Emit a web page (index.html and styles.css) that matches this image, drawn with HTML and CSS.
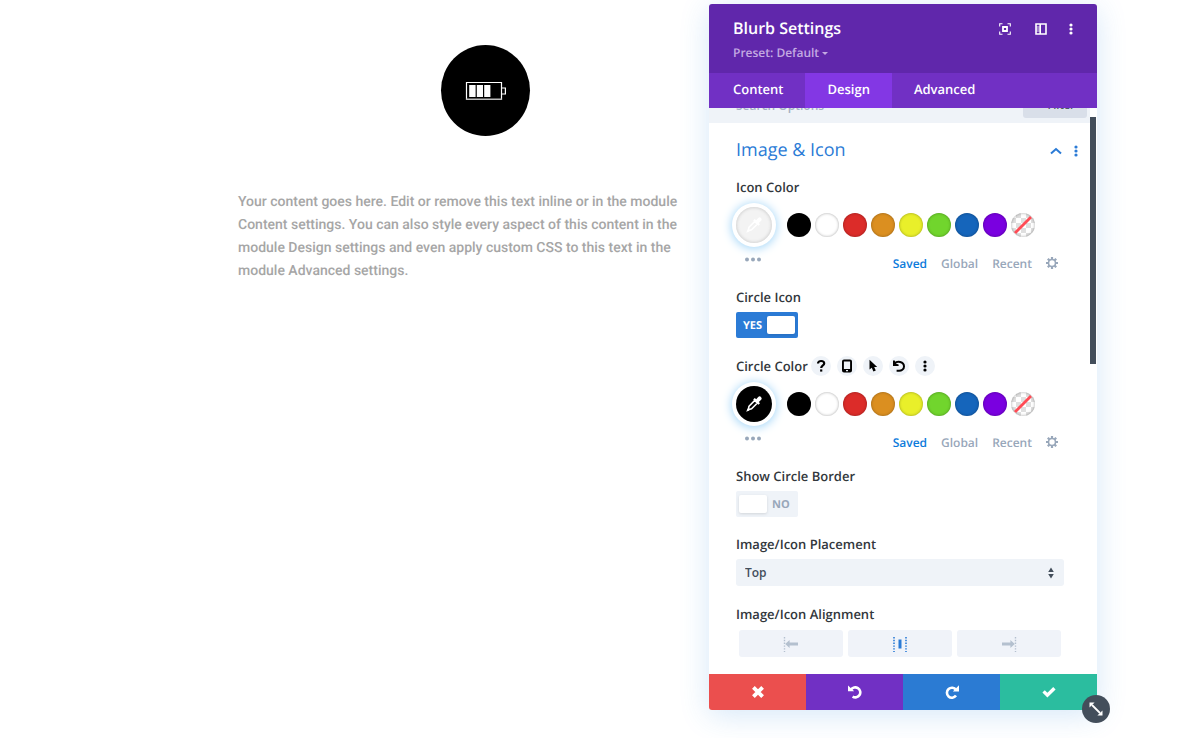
FILE: index.html
```html
<!DOCTYPE html>
<html lang="en">
<head>
<meta charset="utf-8">
<meta name="viewport" content="width=device-width, initial-scale=1">
<title>Blurb Settings</title>
<link rel="stylesheet" href="styles.css">
</head>
<body>
<svg width="0" height="0" class="sprite" aria-hidden="true">
  <defs>
    <symbol id="dots-v" viewBox="0 0 4 12"><circle cx="2" cy="2" r="1.6"/><circle cx="2" cy="6" r="1.6"/><circle cx="2" cy="10" r="1.6"/></symbol>
    <symbol id="dots-h" viewBox="0 0 18 5"><circle cx="3" cy="2.5" r="2"/><circle cx="9" cy="2.5" r="2"/><circle cx="15" cy="2.5" r="2"/></symbol>
    <symbol id="dropper" viewBox="0 0 18 18"><path d="M3.2 14.8 4 11.2 9.8 5.4 12.4 8 6.6 13.8Z" fill="none" stroke="currentColor" stroke-width="1.6" stroke-linejoin="round"/><path d="M8.2 4.6 9.8 3 11.2 4.2 13.2 2Q14.6.6 16 1.9 17.4 3.4 16.2 4.8L13.8 7 15 8.2 13.4 9.8Z"/><path d="M1.2 16.8 2.6 13.6 4.4 15.4Z"/></symbol>
    <symbol id="gear" viewBox="0 0 12 12"><circle cx="6" cy="6" r="3.5" fill="none" stroke="currentColor" stroke-width="1.6"/><path d="M6 0V2.4M6 9.6V12M0 6h2.4M9.6 6H12M1.8 1.8 3.4 3.4M8.6 8.6 10.2 10.2M10.2 1.8 8.6 3.4M3.4 8.6 1.8 10.2" fill="none" stroke="currentColor" stroke-width="2.2"/></symbol>
    <symbol id="undo" viewBox="0 0 14 14"><path d="M3 4.8A5 5 0 1 1 4.6 11.6" fill="none" stroke="currentColor" stroke-width="2.6"/><path d="M0 .4 6.2 6.2H0Z"/></symbol>
    <symbol id="undo-thin" viewBox="0 0 14 14"><path d="M2.6 4.6C5 1.4 12 2.4 12 7.4 12 10.4 9.4 12 6.6 11.8H4.6" fill="none" stroke="currentColor" stroke-width="2"/><path d="M1 1.6V7H6.6V5.4L3.6 4.6 2.8 1.6Z"/></symbol>
  </defs>
</svg>

<main class="blurb">
  <div class="blurb-icon">
    <svg width="42" height="20" viewBox="0 0 42 20" fill="none" aria-hidden="true">
      <path d="M1.5 1.5H36.5V18.5H1.5Z" stroke="#fff" stroke-width="1.2"/>
      <path d="M1 18.3H37" stroke="#bbb" stroke-width="1.4"/>
      <path d="M37 7H40.4V13H37" stroke="#fff" stroke-width="1.2"/>
      <path d="M4.2 4H10.6V16H4.2ZM11.8 4H18V16H11.8ZM19.2 4H25.4V16H19.2Z" fill="#fff"/>
    </svg>
  </div>
  <p class="blurb-text">Your content goes here. Edit or remove this text inline or in the module Content settings. You can also style every aspect of this content in the module Design settings and even apply custom CSS to this text in the module Advanced settings.</p>
</main>

<aside class="panel" aria-label="Blurb Settings">
  <header class="panel-header">
    <div>
      <h1 class="panel-title">Blurb Settings</h1>
      <button class="preset">Preset: Default <span class="caret"></span></button>
    </div>
    <div class="header-actions">
      <button aria-label="Expand"><svg width="12" height="12" viewBox="0 0 12 12" fill="none" stroke="currentColor"><path d="M.7 3.5V.7H3.5M8.5.7H11.3V3.5M11.3 8.5V11.3H8.5M3.5 11.3H.7V8.5" stroke-width="1.1"/><path d="M4 4H8V8H4Z" stroke-width="1.8"/></svg></button>
      <button aria-label="Dock panel"><svg width="12" height="12" viewBox="0 0 12 12" fill="none" stroke="currentColor"><path d="M1 1H11V11H1ZM5.2 1V11" stroke-width="1.6"/><path d="M1 4H5M1 6H5M1 8H5" stroke-width=".8"/></svg></button>
      <button aria-label="More"><svg width="4" height="12"><use href="#dots-v"/></svg></button>
    </div>
  </header>
  <nav class="tabs">
    <button class="tab">Content</button>
    <button class="tab tab-active">Design</button>
    <button class="tab">Advanced</button>
  </nav>

  <div class="panel-body">
    <div class="panel-content">
      <div class="search-clip">
        <div class="search">
          <input type="search" class="search-input" placeholder="Search Options" aria-label="Search Options">
          <button class="filter"><span>+</span> Filter</button>
        </div>
      </div>
      <section class="options">
        <div class="section-head">
          <h2 class="section-title">Image &amp; Icon</h2>
          <button aria-label="Collapse"><svg width="12" height="8" viewBox="0 0 12 8" fill="none" stroke="currentColor" stroke-width="2"><path d="M1 6.6 6 2 11 6.6"/></svg></button>
          <button aria-label="Section options"><svg width="4" height="12"><use href="#dots-v"/></svg></button>
        </div>

        <div class="field field-color">
          <div class="label-row"><span class="label">Icon Color</span></div>
          <div class="palette">
            <button class="picker picker-white" aria-label="Pick icon color"><svg width="18" height="18"><use href="#dropper"/></svg></button>
            <button class="swatch black" aria-label="Black"></button>
            <button class="swatch white" aria-label="White"></button>
            <button class="swatch red" aria-label="Red"></button>
            <button class="swatch orange" aria-label="Orange"></button>
            <button class="swatch yellow" aria-label="Yellow"></button>
            <button class="swatch green" aria-label="Green"></button>
            <button class="swatch blue" aria-label="Blue"></button>
            <button class="swatch purple" aria-label="Purple"></button>
            <button class="swatch none" aria-label="Transparent"><svg width="24" height="24" viewBox="0 0 24 24"><path d="M4 20 20 4" stroke="#ff4b55" stroke-width="2.8"/></svg></button>
          </div>
          <div class="palette-foot">
            <button class="more" aria-label="More colors"><svg width="18" height="5"><use href="#dots-h"/></svg></button>
            <button class="source source-active">Saved</button>
            <button class="source">Global</button>
            <button class="source">Recent</button>
            <button class="source" aria-label="Palette settings"><svg width="12" height="12"><use href="#gear"/></svg></button>
          </div>
        </div>

        <div class="field">
          <label class="label" for="circle-icon">Circle Icon</label>
          <label class="toggle toggle-on">YES<input type="checkbox" id="circle-icon" checked></label>
        </div>

        <div class="field field-color">
          <div class="label-row label-row-tools">
            <span class="label">Circle Color</span>
            <button class="tool" aria-label="Help"><svg width="10" height="14" viewBox="0 0 10 14" fill="none" stroke="currentColor" stroke-width="2.2"><path d="M2 4.4C2 1.2 8.2 1.2 8.2 4.4 8.2 6.4 5.2 6.4 5.2 9"/><path d="M5.2 10.4V12.6"/></svg></button>
            <button class="tool" aria-label="Responsive"><svg width="10" height="14" viewBox="0 0 10 14"><path fill-rule="evenodd" d="M2 .5H8Q10 .5 10 2.5V11.5Q10 13.5 8 13.5H2Q0 13.5 0 11.5V2.5Q0 .5 2 .5ZM1.9 2.5V10H8.1V2.5ZM4 11V12.3H6V11Z"/></svg></button>
            <button class="tool" aria-label="Hover"><svg width="10" height="14" viewBox="0 0 10 14"><path d="M1.5.8V10.6L3.8 8.8 5.4 12.6 7.8 11.6 6.2 8H9.2Z"/></svg></button>
            <button class="tool" aria-label="Reset"><svg width="14" height="14"><use href="#undo-thin"/></svg></button>
            <button class="tool" aria-label="More"><svg width="4" height="12"><use href="#dots-v"/></svg></button>
          </div>
          <div class="palette">
            <button class="picker picker-black" aria-label="Pick circle color"><svg width="18" height="18"><use href="#dropper"/></svg></button>
            <button class="swatch black" aria-label="Black"></button>
            <button class="swatch white" aria-label="White"></button>
            <button class="swatch red" aria-label="Red"></button>
            <button class="swatch orange" aria-label="Orange"></button>
            <button class="swatch yellow" aria-label="Yellow"></button>
            <button class="swatch green" aria-label="Green"></button>
            <button class="swatch blue" aria-label="Blue"></button>
            <button class="swatch purple" aria-label="Purple"></button>
            <button class="swatch none" aria-label="Transparent"><svg width="24" height="24" viewBox="0 0 24 24"><path d="M4 20 20 4" stroke="#ff4b55" stroke-width="2.8"/></svg></button>
          </div>
          <div class="palette-foot">
            <button class="more" aria-label="More colors"><svg width="18" height="5"><use href="#dots-h"/></svg></button>
            <button class="source source-active">Saved</button>
            <button class="source">Global</button>
            <button class="source">Recent</button>
            <button class="source" aria-label="Palette settings"><svg width="12" height="12"><use href="#gear"/></svg></button>
          </div>
        </div>

        <div class="field">
          <label class="label" for="circle-border">Show Circle Border</label>
          <label class="toggle"><input type="checkbox" id="circle-border">NO</label>
        </div>

        <div class="field">
          <label class="label" for="placement">Image/Icon Placement</label>
          <div class="select-wrap">
            <select id="placement" class="select"><option>Top</option><option>Left</option></select>
            <svg class="select-arrows" width="6" height="12" viewBox="0 0 6 12" aria-hidden="true"><path d="M3 .4 5.8 5H.2ZM3 11.6 5.8 7H.2Z"/></svg>
          </div>
        </div>

        <div class="field">
          <span class="label">Image/Icon Alignment</span>
          <div class="align">
            <button class="align-option" aria-label="Left"><svg width="16" height="16" viewBox="0 0 16 16"><path d="M1.5 1V16" stroke="currentColor" stroke-width="1.4" stroke-dasharray="1.4 1.4"/><path d="M2.2 8 6.6 4V6.5H15V9.5H6.6V12Z"/></svg></button>
            <button class="align-option align-active" aria-label="Center"><svg width="16" height="16" viewBox="0 0 16 16"><path d="M2 1V16M14 1V16" stroke="currentColor" stroke-width="1.6" stroke-dasharray="1.4 1.4"/><path d="M6.5 3.5H9.5V12.5H6.5Z"/></svg></button>
            <button class="align-option" aria-label="Right"><svg width="16" height="16" viewBox="0 0 16 16"><path d="M14.5 1V16" stroke="currentColor" stroke-width="1.4" stroke-dasharray="1.4 1.4"/><path d="M13.8 8 9.4 4V6.5H1V9.5H9.4V12Z"/></svg></button>
          </div>
        </div>
      </section>
    </div>
    <div class="scrollbar"><div class="scroll-thumb"></div></div>
  </div>

  <footer class="panel-footer">
    <button class="cancel" aria-label="Discard"><svg width="12" height="12" viewBox="0 0 12 12" fill="none" stroke="currentColor" stroke-width="3.8"><path d="M1.4 1.4 10.6 10.6M10.6 1.4 1.4 10.6"/></svg></button>
    <button class="undo" aria-label="Undo"><svg width="14" height="14"><use href="#undo"/></svg></button>
    <button class="redo" aria-label="Redo"><svg width="14" height="14" viewBox="0 0 14 14"><path d="M11 4.8A5 5 0 1 0 11 10.6" fill="none" stroke="currentColor" stroke-width="2.6"/><path d="M14 .2 7.8 6.4H14Z"/></svg></button>
    <button class="save" aria-label="Save"><svg width="14" height="12" viewBox="0 0 14 12" fill="none" stroke="currentColor" stroke-width="3.4"><path d="M1.6 5.4 5.4 9.2 12.4 2.2"/></svg></button>
  </footer>
  <button class="resize" aria-label="Resize"><svg width="14" height="14" viewBox="0 0 14 14"><path d="M3 3 11 11" stroke="currentColor" stroke-width="1.8"/><path d="M.5.5H5.6L.5 5.6ZM13.5 13.5V8.4L8.4 13.5Z"/></svg></button>
</aside>
</body>
</html>
```
FILE: styles.css
```css
* {
  box-sizing: border-box;
}

body {
  margin: 0;
  background: #fff;
  font-family: "Open Sans", sans-serif;
  font-size: 12px;
  font-weight: 600;
  text-rendering: geometricPrecision;
  color: #32373c;
}

h1, h2, p {
  margin: 0;
}

button {
  display: flex;
  align-items: center;
  justify-content: center;
  padding: 0;
  border: 0;
  background: none;
  color: inherit;
  font: inherit;
  text-rendering: inherit;
  cursor: pointer;
}

svg {
  display: block;
  fill: currentColor;
}

svg[fill="none"] {
  fill: none;
}

.sprite {
  position: absolute;
}

/* Page module */
.blurb {
  width: 495px;
  margin-left: 238px;
  padding-top: 45px;
}

.blurb-icon {
  display: flex;
  align-items: center;
  justify-content: center;
  width: 89px;
  height: 91px;
  margin: 0 auto 55px;
  border-radius: 50%;
  background: #000;
}

.blurb-text {
  max-width: 480px;
  color: #a6a6a6;
  font: 500 14px/23px Roboto, sans-serif;
}

/* Floating settings window */
.panel {
  position: absolute;
  top: 4px;
  right: 102px;
  width: 388px;
  border-radius: 3px;
  background: #fff;
  box-shadow: 0 5px 30px rgba(43, 135, 218, 0.2);
}

.panel-header {
  display: flex;
  justify-content: space-between;
  padding: 12px 24px 8px;
  border-radius: 3px 3px 0 0;
  background: #6027ab;
  color: #fff;
}

.panel-title {
  font-size: 16px;
  font-weight: 600;
  line-height: 25px;
}

.preset {
  gap: 3px;
  color: #c3a9e2;
  line-height: 24px;
}

.caret {
  border: 3px solid transparent;
  border-top-color: currentColor;
  border-bottom: 0;
}

.header-actions {
  display: flex;
  align-items: center;
  gap: 24px;
  height: 26px;
}

.header-actions button:last-child {
  margin-left: -2px;
}

.tabs {
  display: flex;
  height: 35px;
  background: #7130c4;
  color: #fff;
}

.tab {
  padding: 0 22px 3px;
  font-size: 13px;
}

.tab:first-child {
  padding-left: 24px;
}

.tab-active {
  background: #8337e4;
}

.panel-body {
  display: flex;
}

.panel-content {
  flex: 1;
}

.scrollbar {
  width: 7px;
  padding-top: 9px;
}

.scroll-thumb {
  width: 6px;
  height: 247px;
  background: #434e5b;
}

.search-clip {
  display: flex;
  align-items: flex-end;
  height: 15px;
  overflow: hidden;
}

.search {
  display: flex;
  flex: 1;
  align-items: center;
  height: 36px;
  padding: 0 3px 0 27px;
  background: #eff3f8;
}

.search-input {
  flex: 1;
  min-width: 0;
  padding: 0;
  border: 0;
  background: none;
  font: inherit;
}

.search-input::placeholder {
  color: #a3b0c2;
}

.filter {
  gap: 6px;
  width: 64px;
  height: 26px;
  border-radius: 3px;
  background: #d9dfe9;
  color: #4c5866;
  font-size: 11px;
}

.options {
  padding: 12px 26px 17px 27px;
}

.section-head {
  display: flex;
  align-items: center;
  gap: 12px;
  height: 31px;
  margin: 0 -14px 10px 0;
  color: #2b7bd6;
}

.section-title {
  flex: 1;
  padding-bottom: 1px;
  font-size: 18px;
  font-weight: 400;
}

.field {
  margin-bottom: 17px;
}

.field:last-child {
  margin-bottom: 0;
}

.field-color {
  margin-bottom: 14px;
}

.label {
  display: block;
  font-size: 13px;
  line-height: 20px;
}

.label-row {
  display: flex;
  align-items: center;
  gap: 3px;
  height: 21px;
}

.tool {
  width: 20px;
  height: 20px;
  margin-right: 3px;
  border-radius: 50%;
  background: #eff3f8;
  color: #000;
}

.palette {
  display: flex;
  align-items: center;
  gap: 4px;
  margin-top: 10px;
}

.picker {
  width: 36px;
  height: 36px;
  margin-right: 11px;
  border-radius: 50%;
  color: #fff;
}

.picker-white {
  background: #f3f3f3;
  box-shadow: inset 0 0 3px 1px #d4d4d4, 0 0 0 4px #fff, 0 1px 10px 5px #a9d8f8;
}

.picker-black {
  background: #000;
  box-shadow: 0 0 0 4px #fff, 0 1px 10px 5px #a9d8f8;
}

.swatch {
  width: 24px;
  height: 24px;
  border-radius: 50%;
  box-shadow: inset 0 0 3px rgba(0, 0, 0, 0.35);
}

.black { background: #000; }
.white { background: #fff; }
.red { background: #dc2c29; }
.orange { background: #db8f20; }
.yellow { background: #e9ef2a; }
.green { background: #71d52d; }
.blue { background: #1565bb; }
.purple { background: #7a00e0; }
.none { background: repeating-conic-gradient(#dfdfdf 0 25%, #fff 0 50%) 0 0 / 10px 10px; }

.palette-foot {
  display: flex;
  align-items: center;
  gap: 14px;
  height: 20px;
  margin-top: 10px;
  padding-right: 6px;
}

.more {
  align-self: flex-start;
  margin: 4px auto 0 8px;
  color: #98a7ba;
}

.source {
  color: #98a7ba;
}

.source-active {
  color: #0d7bdb;
}

.toggle {
  display: flex;
  align-items: center;
  gap: 5px;
  width: 62px;
  height: 26px;
  margin-top: 5px;
  padding: 0 3px;
  border-radius: 2px;
  background: #eff3f8;
  color: #98a7ba;
  font-size: 11px;
  font-weight: 700;
}

.toggle-on {
  justify-content: flex-end;
  background: #2b7bd6;
  color: #fff;
}

.toggle input {
  width: 28px;
  height: 18px;
  margin: 0;
  border-radius: 2px;
  background: #fff;
  box-shadow: 0 1px 3px rgba(0, 0, 0, 0.12);
  appearance: none;
}

.select-wrap {
  display: grid;
  align-items: center;
  margin: 5px 0 18px;
  color: #434e5b;
}

.select {
  grid-area: 1 / 1;
  height: 27px;
  padding: 0 9px;
  border: 0;
  border-radius: 3px;
  background: #eff3f8;
  color: inherit;
  font: inherit;
  appearance: none;
}

.select-arrows {
  grid-area: 1 / 1;
  justify-self: end;
  margin-right: 10px;
  pointer-events: none;
}

.align {
  display: grid;
  grid-template-columns: repeat(3, 1fr);
  gap: 5px;
  margin: 6px 3px 0;
}

.align-option {
  height: 27px;
  border-radius: 3px;
  background: #f0f3f9;
  color: #b4c0cf;
}

.align-active {
  color: #2b7bd6;
}

.panel-footer {
  display: grid;
  grid-template-columns: repeat(4, 1fr);
  height: 36px;
  border-radius: 0 0 3px 3px;
  overflow: hidden;
  color: #fff;
}

.cancel { background: #eb4f4e; }
.undo { background: #7130c4; }
.redo { background: #2b7bd3; }
.save { background: #2bbd9f; }

.resize {
  position: absolute;
  right: -13px;
  bottom: -13px;
  width: 28px;
  height: 28px;
  border-radius: 50%;
  background: #434e5b;
  color: #fff;
}
```
